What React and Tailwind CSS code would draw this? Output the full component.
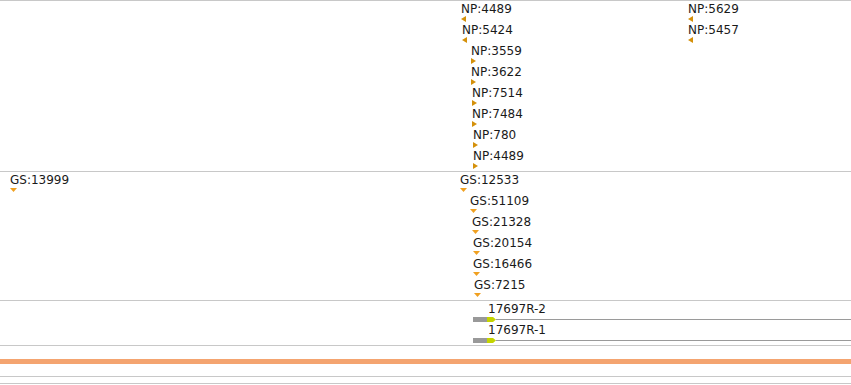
import React from "react";

const font = { fontFamily: '"DejaVu Sans", Verdana, sans-serif' };

function Tri({ dir }) {
  if (dir === "left")
    return (
      <svg width="5" height="6" viewBox="0 0 5 6" className="block">
        <polygon points="5,0 0,3 5,6" fill="#d4900a" />
      </svg>
    );
  if (dir === "right")
    return (
      <svg width="5" height="6" viewBox="0 0 5 6" className="block">
        <polygon points="0,0 5,3 0,6" fill="#d4900a" />
      </svg>
    );
  return (
    <svg width="7" height="4" viewBox="0 0 7 4" className="block mt-px">
      <polygon points="0,0 7,0 3.5,4" fill="#f0a020" />
    </svg>
  );
}

function Feature({ label, dir, indent = 0 }) {
  return (
    <div className="flex flex-col h-[21px]" style={{ marginLeft: indent }}>
      <div className="text-[12px] leading-[13px] text-[#1a1a1a] whitespace-nowrap">{label}</div>
      <Tri dir={dir} />
    </div>
  );
}

const np = [
  ["NP:4489", 0, "left"],
  ["NP:5424", 1, "left"],
  ["NP:3559", 10, "right"],
  ["NP:3622", 10, "right"],
  ["NP:7514", 11, "right"],
  ["NP:7484", 11, "right"],
  ["NP:780", 12, "right"],
  ["NP:4489", 12, "right"],
];

const gs = [
  ["GS:12533", 0],
  ["GS:51109", 10],
  ["GS:21328", 12],
  ["GS:20154", 13],
  ["GS:16466", 13],
  ["GS:7215", 14],
];

function Transcript({ label }) {
  return (
    <div className="flex flex-col h-[21px]">
      <div className="pl-[15px] text-[12px] leading-[13px] text-[#1a1a1a] whitespace-nowrap">{label}</div>
      <div className="flex items-center h-[5px] mt-[1px]">
        <div className="h-[5px] w-[14px] bg-[#999999] shrink-0" />
        <svg width="9" height="5" viewBox="0 0 9 5" className="block shrink-0">
          <polygon points="0,0 6,0 9,2.5 6,5 0,5" fill="#c4d400" />
        </svg>
        <div className="h-px flex-1 bg-[#9a9a9a]" />
      </div>
    </div>
  );
}

export default function App() {
  return (
    <div className="w-[851px] h-[385px] bg-white overflow-hidden" style={font}>
      {/* NP track */}
      <div className="relative h-[171px] border-t border-[#c8c8c8]">
        <div className="absolute left-[461px] top-[2px] flex flex-col">
          {np.map(([l, ind, d], i) => (
            <Feature key={i} label={l} indent={ind} dir={d} />
          ))}
        </div>
        <div className="absolute left-[688px] top-[2px] flex flex-col">
          <Feature label="NP:5629" dir="left" />
          <Feature label="NP:5457" dir="left" />
        </div>
      </div>
      {/* GS track */}
      <div className="relative h-[129px] border-t border-[#c8c8c8]">
        <div className="absolute left-[10px] top-[2px]">
          <Feature label="GS:13999" dir="down" />
        </div>
        <div className="absolute left-[460px] top-[2px] flex flex-col">
          {gs.map(([l, ind], i) => (
            <Feature key={i} label={l} indent={ind} dir="down" />
          ))}
        </div>
      </div>
      {/* transcript track */}
      <div className="relative h-[45px] border-t border-[#c8c8c8]">
        <div className="absolute left-[473px] right-0 top-[2px] flex flex-col">
          <Transcript label="17697R-2" />
          <Transcript label="17697R-1" />
        </div>
      </div>
      {/* bottom */}
      <div className="border-t border-[#c8c8c8] pt-[13px]">
        <div className="h-[5px] bg-[#f4a470]" />
        <div className="h-[12px]" />
        <div className="h-[7px] border-t border-[#c8c8c8]" />
        <div className="border-t border-[#c8c8c8]" />
      </div>
    </div>
  );
}
